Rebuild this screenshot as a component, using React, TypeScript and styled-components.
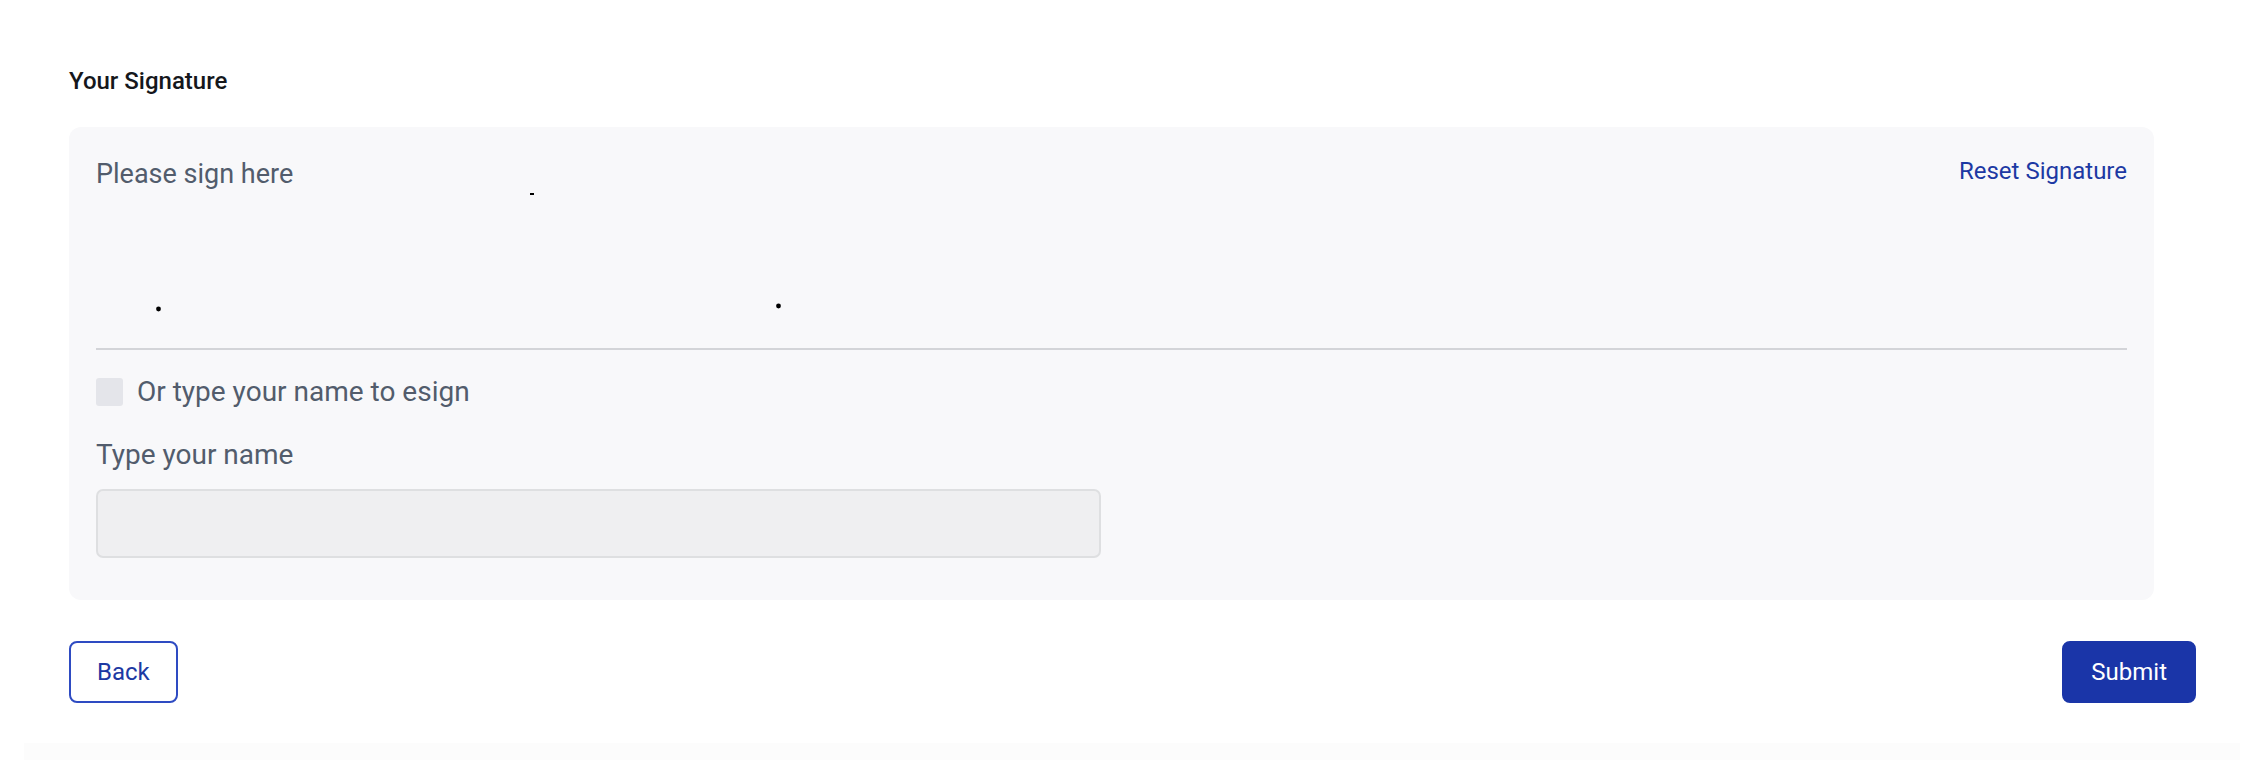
import styled, { createGlobalStyle } from "styled-components";

const GlobalStyle = createGlobalStyle`
    body {
        margin: 0;
        background: #fff;
        font-family: Roboto, "Liberation Sans", Arial, sans-serif;
    }
`;

const Page = styled.div`
    width: 2256px;
    height: 772px;
    box-sizing: border-box;
    padding: 63px 60px 0 69px;
    display: flex;
    flex-direction: column;
`;

const Title = styled.h2`
    margin: 0;
    font-size: 24px;
    line-height: 36px;
    font-weight: 500;
    color: #15171c;
`;

const Panel = styled.div`
    margin: 28px 42px 0 0;
    padding: 26px 27px 42px;
    background: #f8f8fa;
    border-radius: 12px;
`;

const SignaturePad = styled.div`
    position: relative;
    height: 195px;
    border-bottom: 2px solid #d3d4d8;
`;

const PadHeader = styled.div`
    display: flex;
    justify-content: space-between;
    align-items: flex-start;
`;

const Hint = styled.span`
    font-size: 27px;
    line-height: 42px;
    color: #525c6c;
`;

const LinkButton = styled.button`
    border: none;
    background: none;
    padding: 0;
    font-family: inherit;
    font-size: 24px;
    line-height: 36px;
    color: #1d39a3;
    cursor: pointer;
`;

const Strokes = styled.svg`
    position: absolute;
    inset: 0;
    width: 100%;
    height: 100%;
    pointer-events: none;
`;

const CheckRow = styled.label`
    margin-top: 21px;
    display: flex;
    align-items: center;
    gap: 14px;
    font-size: 28px;
    line-height: 42px;
    color: #525c6c;
`;

const Checkbox = styled.span`
    width: 27px;
    height: 28px;
    border-radius: 3px;
    background: #e4e5ea;
`;

const FieldLabel = styled.div`
    margin-top: 21px;
    font-size: 28px;
    line-height: 42px;
    color: #525c6c;
`;

const NameInput = styled.input`
    margin-top: 13px;
    display: block;
    width: 1005px;
    height: 69px;
    box-sizing: border-box;
    background: #efeff1;
    border: 2px solid #dedfe1;
    border-radius: 7px;
    outline: none;
`;

const Actions = styled.div`
    margin-top: 41px;
    display: flex;
    justify-content: space-between;
`;

const Button = styled.button<{ $primary?: boolean }>`
    height: 62px;
    padding: 0 ${(p) => (p.$primary ? "27px" : "26px")};
    border-radius: 8px;
    border: 2px solid ${(p) => (p.$primary ? "#1a35a8" : "#2e4bc2")};
    background: ${(p) => (p.$primary ? "#1a35a8" : "#fff")};
    color: ${(p) => (p.$primary ? "#fff" : "#1d39a3")};
    font-family: inherit;
    font-size: 24px;
    cursor: pointer;
`;

const Footer = styled.div`
    margin: 40px -44px 0 -45px;
    height: 17px;
    background: #fcfcfc;
`;

function App() {
    return (
        <>
            <GlobalStyle />
            <Page>
                <Title>Your Signature</Title>
                <Panel>
                    <SignaturePad>
                        <PadHeader>
                            <Hint>Please sign here</Hint>
                            <LinkButton>Reset Signature</LinkButton>
                        </PadHeader>
                        <Strokes>
                            <rect x="434" y="40" width="4" height="2" fill="#000" />
                            <circle cx="62.5" cy="156" r="2.4" fill="#000" />
                            <circle cx="682.5" cy="153" r="2.4" fill="#000" />
                        </Strokes>
                    </SignaturePad>
                    <CheckRow>
                        <Checkbox />
                        Or type your name to esign
                    </CheckRow>
                    <FieldLabel>Type your name</FieldLabel>
                    <NameInput disabled />
                </Panel>
                <Actions>
                    <Button>Back</Button>
                    <Button $primary>Submit</Button>
                </Actions>
                <Footer />
            </Page>
        </>
    );
}

export default App;
